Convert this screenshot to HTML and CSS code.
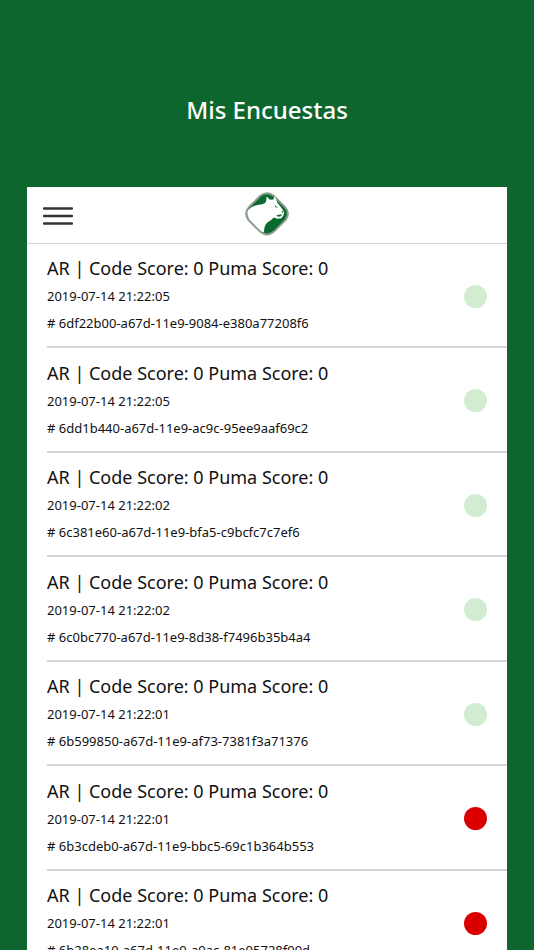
FILE: index.html
```html
<!DOCTYPE html>
<html lang="es">
<head>
<meta charset="utf-8">
<meta name="viewport" content="width=device-width, initial-scale=1">
<title>Mis Encuestas</title>
<link rel="stylesheet" href="styles.css">
</head>
<body>
<h1 class="title">Mis Encuestas</h1>
<main class="screen">
<header class="bar">
<button class="menu" type="button" aria-label="Menú"><svg width="30" height="18" viewBox="0 0 30 18"><path d="M1 1.5H29M1 9H29M1 16.500H29" stroke="#333" stroke-width="2.400" stroke-linecap="round"/></svg></button>
<svg class="logo" width="44" height="45" viewBox="24 18 132 134" aria-hidden="true">
<path d="M70 32Q90 16 110 32L144 66Q160 84 146 104L110 140Q90 156 70 140L34 104Q20 84 36 66Z" fill="#0b6b2e" stroke="#8c9c8e" stroke-width="6"/>
<path d="M33 75Q46 61 66 59Q82 58 87 50L89 34L99 44L109 43L113 33L118 44L121 53L132 66L142 81L139 91L133 99L121 101L110 97Q103 106 92 111Q81 119 81 141L72 138L37 103Q27 87 33 75Z" fill="#fff"/>
<path d="M113 60L123 67L115 66ZM118 90L135 87L132 93L123 95ZM134 77L141 80L137 84Z" fill="#0b6b2e"/>
</svg>
</header>
<ul class="list">
<li class="item"><div><h2>AR | Code Score: 0 Puma Score: 0</h2><p>2019-07-14 21:22:05</p><p># 6df22b00-a67d-11e9-9084-e380a77208f6</p></div><span class="dot"></span></li>
<li class="item"><div><h2>AR | Code Score: 0 Puma Score: 0</h2><p>2019-07-14 21:22:05</p><p># 6dd1b440-a67d-11e9-ac9c-95ee9aaf69c2</p></div><span class="dot"></span></li>
<li class="item"><div><h2>AR | Code Score: 0 Puma Score: 0</h2><p>2019-07-14 21:22:02</p><p># 6c381e60-a67d-11e9-bfa5-c9bcfc7c7ef6</p></div><span class="dot"></span></li>
<li class="item"><div><h2>AR | Code Score: 0 Puma Score: 0</h2><p>2019-07-14 21:22:02</p><p># 6c0bc770-a67d-11e9-8d38-f7496b35b4a4</p></div><span class="dot"></span></li>
<li class="item"><div><h2>AR | Code Score: 0 Puma Score: 0</h2><p>2019-07-14 21:22:01</p><p># 6b599850-a67d-11e9-af73-7381f3a71376</p></div><span class="dot"></span></li>
<li class="item"><div><h2>AR | Code Score: 0 Puma Score: 0</h2><p>2019-07-14 21:22:01</p><p># 6b3cdeb0-a67d-11e9-bbc5-69c1b364b553</p></div><span class="dot dot-red"></span></li>
<li class="item"><div><h2>AR | Code Score: 0 Puma Score: 0</h2><p>2019-07-14 21:22:01</p><p># 6b28ea10-a67d-11e9-a9ac-81e05728f99d</p></div><span class="dot dot-red"></span></li>
</ul>
</main>
</body>
</html>
```
FILE: styles.css
```css
* { box-sizing: border-box; margin: 0; padding: 0; }
body {
  display: flex;
  flex-direction: column;
  height: 100vh;
  overflow: hidden;
  padding: 92px 27px 0;
  background: #0d662e;
  color: #111;
  font-family: "Noto Sans", "Open Sans", sans-serif;
}
.title {
  flex: none;
  margin-bottom: 59px;
  color: #fff;
  font-size: 24px;
  font-weight: 500;
  line-height: 36px;
  text-align: center;
}
.screen {
  flex: 1;
  min-height: 0;
  overflow: hidden;
  background: #fff;
}
.bar {
  display: grid;
  grid-template-columns: 1fr auto 1fr;
  align-items: center;
  height: 57px;
  padding: 0 16px 4px;
  border-bottom: 1px solid #d6d6d6;
}
.menu {
  justify-self: start;
  margin-top: 6px;
  border: 0;
  background: none;
  line-height: 0;
}
.logo { display: block; }
.list { list-style: none; padding-left: 20px; }
.item {
  display: flex;
  align-items: center;
  justify-content: space-between;
  height: 105px;
  padding-right: 20px;
  border-bottom: 2px solid #d4d4d4;
}
.item:nth-child(odd) { height: 104px; }
h2 { font-size: 18px; font-weight: 400; line-height: 30px; }
p { font-size: 13px; line-height: 27px; }
.dot {
  flex: none;
  width: 23px;
  height: 23px;
  margin-top: 2px;
  border-radius: 50%;
  background: #d1ecd1;
}
.dot-red { background: #db0000; }
```
